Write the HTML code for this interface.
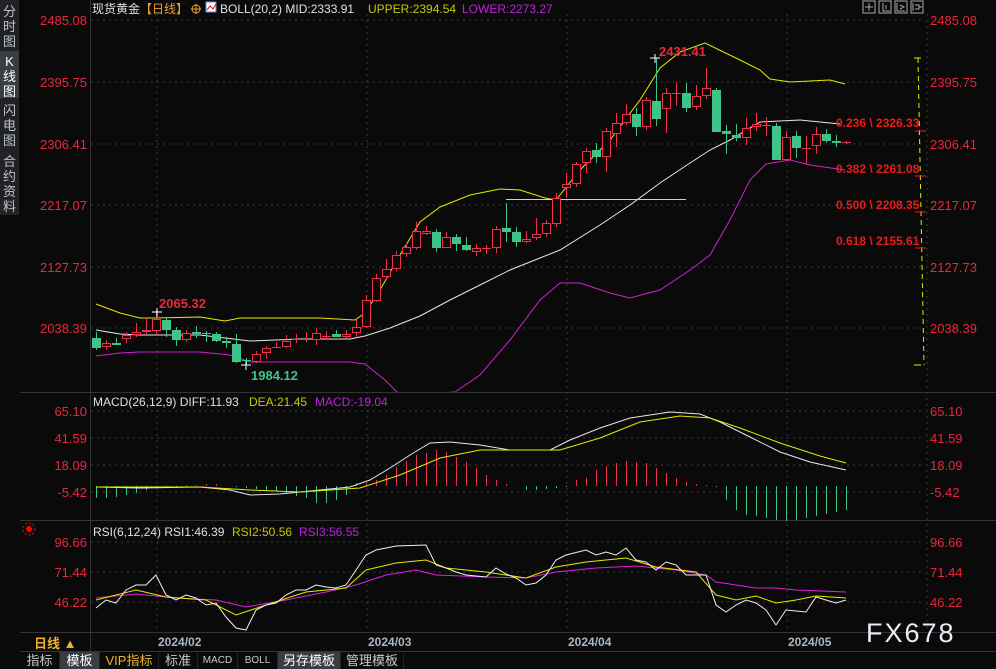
<!DOCTYPE html>
<html><head><meta charset="utf-8"><style>
*{margin:0;padding:0}
body{width:996px;height:669px;background:#0a0a0a;overflow:hidden;position:relative;font-family:"Liberation Sans","Noto Sans CJK SC",sans-serif}
#side{position:absolute;left:0;top:0;width:19px;height:215px;background:#202226}
.st{position:absolute;left:0;width:19px;color:#bfc3c8;font-size:13px;line-height:15px;text-align:center}
#tabs{position:absolute;left:20px;top:652px;height:17px;width:976px;background:#0a0a0a;font-size:13px;line-height:17px;color:#c9c9c9}
#tabs span{position:absolute;top:0;height:17px;text-align:center;border-right:1px solid #222}
svg{position:absolute;left:0;top:0}
</style></head><body>
<svg id="s" width="996" height="669" xmlns="http://www.w3.org/2000/svg" font-family="Liberation Sans, Noto Sans CJK SC, sans-serif">
<g stroke="#333" stroke-width="1">
<line x1="20" y1="392.5" x2="996" y2="392.5"/>
<line x1="20" y1="520.5" x2="996" y2="520.5"/>
<line x1="20" y1="632.5" x2="996" y2="632.5"/>
<line x1="20" y1="651.5" x2="996" y2="651.5"/>
<line x1="90.5" y1="0" x2="90.5" y2="651"/>
</g>
<g stroke="#3a3a3a" stroke-dasharray="2,4">
<line x1="91" y1="20" x2="925" y2="20"/><line x1="91" y1="82" x2="925" y2="82"/><line x1="91" y1="144" x2="925" y2="144"/><line x1="91" y1="205" x2="925" y2="205"/><line x1="91" y1="267" x2="925" y2="267"/><line x1="91" y1="328" x2="925" y2="328"/>
<line x1="91" y1="411" x2="925" y2="411"/><line x1="91" y1="438" x2="925" y2="438"/><line x1="91" y1="465" x2="925" y2="465"/><line x1="91" y1="492" x2="925" y2="492"/>
<line x1="91" y1="542" x2="925" y2="542"/><line x1="91" y1="572" x2="925" y2="572"/><line x1="91" y1="602" x2="925" y2="602"/>
<line x1="157" y1="14" x2="157" y2="632"/><line x1="367" y1="14" x2="367" y2="632"/><line x1="567" y1="14" x2="567" y2="632"/><line x1="787" y1="14" x2="787" y2="632"/><line x1="927" y1="14" x2="927" y2="632"/>
</g>
<g id="g"></g>
<g font-size="13" fill="#e8283c" text-anchor="end">
<text x="87" y="25">2485.08</text><text x="87" y="87">2395.75</text><text x="87" y="149">2306.41</text><text x="87" y="210">2217.07</text><text x="87" y="272">2127.73</text><text x="87" y="333">2038.39</text>
<text x="87" y="416">65.10</text><text x="87" y="443">41.59</text><text x="87" y="470">18.09</text><text x="87" y="497">-5.42</text>
<text x="87" y="547">96.66</text><text x="87" y="577">71.44</text><text x="87" y="607">46.22</text>
</g>
<g font-size="13" fill="#e8283c">
<text x="930" y="25">2485.08</text><text x="930" y="87">2395.75</text><text x="930" y="149">2306.41</text><text x="930" y="210">2217.07</text><text x="930" y="272">2127.73</text><text x="930" y="333">2038.39</text>
<text x="930" y="416">65.10</text><text x="930" y="443">41.59</text><text x="930" y="470">18.09</text><text x="930" y="497">-5.42</text>
<text x="930" y="547">96.66</text><text x="930" y="577">71.44</text><text x="930" y="607">46.22</text>
</g>
<g font-size="12" font-weight="bold" fill="#f01818">
<text x="836" y="127">0.236 \ 2326.33</text><text x="836" y="173">0.382 \ 2261.08</text><text x="836" y="209">0.500 \ 2208.35</text><text x="836" y="245">0.618 \ 2155.61</text>
<text x="159" y="308" fill="#e8283c" font-size="13">2065.32</text>
<text x="659" y="56" fill="#e8283c" font-size="13">2431.41</text>
<text x="251" y="380" fill="#3ec488" font-size="13">1984.12</text>
</g>
<g stroke="#e8e800" stroke-dasharray="5,4"><line x1="918" y1="58" x2="924" y2="365"/></g>
<g stroke="#f01818"><line x1="915" y1="131" x2="926" y2="131"/><line x1="915" y1="176" x2="926" y2="176"/><line x1="915" y1="212" x2="926" y2="212"/><line x1="915" y1="248" x2="926" y2="248"/></g>
<g stroke="#e8e800"><line x1="914" y1="58" x2="921" y2="58"/><line x1="914" y1="365" x2="921" y2="365"/></g>
<g font-size="12">
<text x="92" y="13" fill="#e0e0e0">现货黄金</text><text x="140" y="13" fill="#f0a030">【日线】</text>
<circle cx="196" cy="9" r="4" fill="none" stroke="#f0a030"/><line x1="191" y1="9" x2="201" y2="9" stroke="#f0a030"/><line x1="196" y1="4" x2="196" y2="14" stroke="#f0a030"/>
<rect x="206" y="2" width="10" height="10" fill="#fff" stroke="#6688cc"/><polyline points="207,10 210,6 213,9 216,4" stroke="#d00" fill="none"/>
<text x="220" y="13" fill="#e0e0e0">BOLL(20,2) MID:2333.91</text><text x="368" y="13" fill="#c8c800">UPPER:2394.54</text><text x="462" y="13" fill="#c020e0">LOWER:2273.27</text>
<text x="93" y="406" fill="#e0e0e0">MACD(26,12,9) DIFF:11.93</text><text x="249" y="406" fill="#c8c800">DEA:21.45</text><text x="315" y="406" fill="#c020e0">MACD:-19.04</text>
<text x="93" y="536" fill="#e0e0e0">RSI(6,12,24) RSI1:46.39</text><text x="232" y="536" fill="#c8c800">RSI2:50.56</text><text x="299" y="536" fill="#c020e0">RSI3:56.55</text>
</g>
<circle cx="29" cy="529" r="3" fill="#f00"/><circle cx="29" cy="529" r="6" fill="none" stroke="#f00" stroke-dasharray="2,2"/>
<g fill="none" stroke="#aaa"><rect x="863" y="1" width="12" height="12"/><rect x="879" y="1" width="12" height="12"/><rect x="895" y="1" width="12" height="12"/><rect x="911" y="1" width="12" height="12"/>
<path d="M869 3v8M865 7h8M883 3v8h7M886 5v4M897 3v8h8M900 5l4 2-4 2M913 3v8M915 5h4v4h-4M919 7h3"/></g>
<g font-size="12" fill="#a9b6c8" font-weight="bold"><text x="158" y="646">2024/02</text><text x="368" y="646">2024/03</text><text x="568" y="646">2024/04</text><text x="788" y="646">2024/05</text></g>
<text x="34" y="648" font-size="13" font-weight="bold" fill="#f0b030">日线 ▲</text>
<text x="866" y="642" font-size="27" fill="#e8eef4" letter-spacing="2">FX678</text>
</svg>
<div id="side">
<div class="st" style="top:4px">分<br>时<br>图</div>
<div style="position:absolute;top:51px;left:0;width:19px;height:47px;background:#3a3d44"></div>
<div class="st" style="top:54px;color:#fff">K<br>线<br>图</div>
<div class="st" style="top:103px">闪<br>电<br>图</div>
<div class="st" style="top:154px">合<br>约<br>资<br>料</div>
</div>
<div id="tabs">
<span style="left:0;width:39px">指标</span>
<span style="left:40px;width:39px;background:#3a3d44;color:#fff">模板</span>
<span style="left:80px;width:58px;color:#f0b030">VIP指标</span>
<span style="left:139px;width:38px">标准</span>
<span style="left:178px;width:39px;font-size:10px">MACD</span>
<span style="left:218px;width:39px;font-size:10px">BOLL</span>
<span style="left:258px;width:62px;background:#3a3d44;color:#fff">另存模板</span>
<span style="left:321px;width:62px">管理模板</span>
</div>
<script>
var C=[[338,348,332,350],[347,343,340,350],[343,345,338,345],[339,335,332,343],[335,332,323,337],[332,330,318,335],[331,319,310,335],[320,330,317,337],[330,340,327,346],[340,333,330,342],[332,334,326,338],[333,334,331,342],[334,341,332,342],[341,343,337,348],[344,362,334,363],[360,361,358,365],[362,354,351,363],[353,348,346,359],[347,347,342,348],[347,341,335,348],[339,339,334,343],[339,339,332,342],[340,333,328,345],[336,336,331,340],[334,337,330,337],[337,334,330,338],[333,327,320,337],[327,300,295,328],[301,278,274,302],[277,269,259,280],[269,255,251,271],[254,247,243,257],[248,231,222,250],[234,231,226,235],[232,248,229,252],[248,237,232,248],[237,244,234,251],[245,250,237,251],[252,248,244,256],[248,248,245,254],[248,229,226,253],[228,232,203,242],[232,242,227,247],[242,239,231,243],[238,234,218,240],[234,223,220,237],[224,198,193,227],[188,184,173,198],[184,164,162,187],[163,151,148,173],[150,157,143,163],[157,131,128,172],[134,123,113,147],[123,114,104,125],[114,127,108,136],[127,100,97,130],[101,119,58,126],[109,93,88,133],[93,93,82,106],[93,108,83,112],[107,96,85,110],[96,88,68,99],[90,132,88,132],[131,134,125,154],[135,138,124,141],[138,128,118,145],[127,124,113,131],[125,125,117,136],[126,160,123,160],[160,137,131,161],[136,148,131,158],[148,148,136,164],[146,134,127,154],[134,141,129,143],[141,143,135,147],[143,142,141,144]];
var s='',i,x;
function pl(p,c,w){return '<polyline fill="none" stroke="'+c+'" stroke-width="'+(w||1)+'" points="'+p+'"/>';}
s+='<defs><clipPath id="cm"><rect x="91" y="14" width="834" height="378"/></clipPath></defs><g clip-path="url(#cm)">';
s+=pl("96,304 120,313 140,318 155,318 200,317 225,321 240,318 320,318 355,320 365,313 380,290 400,255 420,222 440,207 470,195 500,189 520,190 545,198 556,200 580,170 610,140 640,100 660,68 680,52 705,43 740,60 760,70 770,79 790,82 830,80 845,84","#e8e800");
s+=pl("96,330 120,334 140,335 200,335 250,341 300,339 350,339 365,336 390,328 420,316 450,300 480,285 510,270 540,258 560,250 600,225 630,205 660,183 690,163 710,150 730,140 760,122 800,120 840,124","#e8e8e8");
s+=pl("96,356 120,353 140,352 200,352 230,355 250,362 350,362 365,364 385,380 400,395 455,392 480,375 510,340 540,300 560,283 580,283 610,293 630,298 660,290 690,270 710,255 730,220 750,180 766,164 790,160 810,165 845,170","#d020d0");
s+='<line x1="506" y1="199.5" x2="686" y2="199.5" stroke="#e8e800"/>';
for(i=0;i<C.length;i++){var c=C[i];x=96+10*i;var up=c[1]<=c[0];var col=up?'#f0304a':'#3ec488';var t=Math.min(c[0],c[1]),b=Math.max(c[0],c[1]);
s+='<line x1="'+(x+.5)+'" y1="'+c[2]+'" x2="'+(x+.5)+'" y2="'+t+'" stroke="'+col+'"/><line x1="'+(x+.5)+'" y1="'+b+'" x2="'+(x+.5)+'" y2="'+c[3]+'" stroke="'+col+'"/>';
if(b-t<1.5)s+='<line x1="'+(x-4)+'" y1="'+(t+.5)+'" x2="'+(x+5)+'" y2="'+(t+.5)+'" stroke="'+col+'"/>';
else if(up)s+='<rect x="'+(x-3.5)+'" y="'+(t+.5)+'" width="8" height="'+(b-t-1)+'" fill="#0a0a0a" stroke="'+col+'"/>';
else s+='<rect x="'+(x-4)+'" y="'+t+'" width="9" height="'+(b-t)+'" fill="'+col+'"/>';}
s+='</g>';
var H=[498,498,497,495,493,490,488,487,487,485,485,484,484,486,487,488,489,490,491,493,496,498,503,503,500,495,483,483,480,475,467,461,455,453,450,452,457,462,468,475,480,484,486,490,490,489,488,487,480,478,470,466,463,461,462,463,468,473,478,482,484,485,487,500,510,515,516,518,520,521,520,518,516,514,512,510];
for(i=0;i<H.length;i++){x=96+10*i+.5;var h=H[i];var col=h<486?'#f0304a':'#3ec488';if(i>=71)col='#3ec488';s+='<line x1="'+x+'" y1="486" x2="'+x+'" y2="'+h+'" stroke="'+col+'"/>';}
s+=pl("96,487 140,488 200,487 230,490 250,495 280,494 320,490 350,487 370,480 390,468 410,455 430,443 450,442 480,445 510,450 550,450 570,440 600,428 630,418 670,412 700,414 720,422 750,437 780,452 810,462 846,470","#e8e8e8");
s+=pl("96,487 200,487 250,490 300,492 360,488 400,475 440,458 480,450 560,450 600,438 640,422 680,416 710,418 740,428 780,443 820,456 846,463","#e8e800");
s+=pl("96,598 136,594 176,598 216,600 246,607 286,600 326,592 356,585 386,575 416,570 436,575 486,577 526,578 556,572 596,568 636,566 676,570 706,575 716,582 736,585 756,588 776,588 796,590 846,592","#e020e0");
s+=pl("96,600 136,590 166,597 206,600 236,615 266,605 306,592 346,588 366,570 396,563 426,560 446,568 486,572 526,578 556,567 586,562 626,558 656,567 696,572 716,595 736,600 756,596 776,603 796,600 816,596 846,598","#e8e800");
s+=pl("96,608 106,600 116,603 126,590 136,585 146,585 156,575 166,595 176,600 186,595 196,598 206,605 216,603 226,617 236,628 246,630 256,610 266,605 276,603 286,595 296,590 306,590 316,585 326,587 336,588 346,585 356,570 366,555 376,550 386,548 396,546 426,545 436,565 446,568 456,572 466,575 486,577 496,568 506,574 516,578 526,585 536,583 546,575 556,560 566,555 586,550 596,555 606,552 616,555 626,548 636,560 646,562 656,570 666,562 676,565 686,575 706,575 716,605 726,612 736,605 746,600 756,603 766,610 776,625 786,610 806,612 816,597 826,600 836,603 846,600","#f0f0f0");
s+='<path d="M152 312h10M157 308v9M241 365h10M246 361v9M650 58h10M655 54v9" stroke="#fff"/>';
document.getElementById('g').innerHTML=s;
</script>
</body></html>
